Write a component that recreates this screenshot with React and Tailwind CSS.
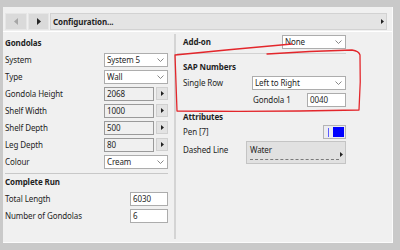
import React from "react";

const font = { fontFamily: '"Noto Sans", "Open Sans", sans-serif' };

function Chevron() {
  return (
    <svg width="7" height="4" viewBox="0 0 7 4" className="shrink-0">
      <path d="M0.5 0.5 L3.5 3.5 L6.5 0.5" fill="none" stroke="#7a7a7a" strokeWidth="0.9" />
    </svg>
  );
}

function Tri({ color = "#222" }) {
  return (
    <svg width="3" height="5" viewBox="0 0 3 5">
      <path d="M0 0 L3 2.5 L0 5 Z" fill={color} />
    </svg>
  );
}

function Dropdown({ value, w }) {
  return (
    <div className={`${w} h-[14px] bg-white border border-[#adadad] flex items-center justify-between pl-[2px] pr-[3px]`}>
      <span className="leading-none">{value}</span>
      <Chevron />
    </div>
  );
}

function NumField({ value }) {
  return (
    <div className="flex items-center gap-[2px]">
      <div className="w-[50px] h-[14px] bg-[#f0f0f0] border border-[#9a9a9a] flex items-center pl-[2px]">
        <span className="leading-none">{value}</span>
      </div>
      <div className="w-[12px] h-[13px] bg-[#e3e3e3] border border-[#d0d0d0] flex items-center justify-center">
        <Tri />
      </div>
    </div>
  );
}

function TextField({ value, w }) {
  return (
    <div className={`${w} h-[14px] bg-white border border-[#acacac] flex items-center pl-[2px]`}>
      <span className="leading-none">{value}</span>
    </div>
  );
}

function Row({ label, children, h = "h-[17px]" }) {
  return (
    <div className={`${h} flex items-center justify-between`}>
      <span className="leading-none">{label}</span>
      {children}
    </div>
  );
}

export default function App() {
  return (
    <div className="w-[400px] h-[250px] bg-[#c9c9c9] relative overflow-hidden text-[8px] tracking-[-0.1px] text-[#1f1f1f]" style={font}>
      <div className="ml-[3px] mt-[7px] w-[390px] h-[236px] bg-[#f0f0f0] border-r border-b border-[#fbfbfb] flex flex-col">
        {/* toolbar */}
        <div className="mt-[6px] h-[17px] flex gap-[1px] pl-[2px] pr-[5px]">
          <div className="w-[22px] bg-[#dadada] border border-[#e6e6e6] flex items-center justify-center">
            <svg width="4" height="7" viewBox="0 0 4 7"><path d="M4 0 L0 3.5 L4 7 Z" fill="#a6a6a6" /></svg>
          </div>
          <div className="w-[21px] bg-[#dadada] border border-[#e6e6e6] flex items-center justify-center">
            <svg width="4" height="7" viewBox="0 0 4 7"><path d="M0 0 L4 3.5 L0 7 Z" fill="#262626" /></svg>
          </div>
          <div className="flex-1 bg-[#e4e4e4] border border-[#d2d2d2] flex items-center justify-between pl-[2px] pr-[2px]">
            <span className="font-bold leading-none">Configuration...</span>
            <Tri />
          </div>
        </div>
        <div className="mt-[1px] h-px bg-white" />
        {/* body */}
        <div className="flex flex-1">
          {/* left */}
          <div className="w-[171px] pl-[2px] pr-[6px] pt-[2px] flex flex-col">
            <div className="h-[17px] flex items-center font-bold leading-none">Gondolas</div>
            <Row label="System"><Dropdown value="System 5" w="w-[64px]" /></Row>
            <Row label="Type"><Dropdown value="Wall" w="w-[64px]" /></Row>
            <Row label="Gondola Height"><NumField value="2068" /></Row>
            <Row label="Shelf Width"><NumField value="1000" /></Row>
            <Row label="Shelf Depth"><NumField value="500" /></Row>
            <Row label="Leg Depth"><NumField value="80" /></Row>
            <Row label="Colour"><Dropdown value="Cream" w="w-[64px]" /></Row>
            <div className="mt-[3px] h-px bg-[#c8c8c8]" />
            <div className="h-[16px] flex items-center font-bold leading-none">Complete Run</div>
            <Row label="Total Length"><TextField value="6030" w="w-[38px]" /></Row>
            <Row label="Number of Gondolas"><TextField value="6" w="w-[38px]" /></Row>
          </div>
          {/* divider */}
          <div className="w-[2px] bg-[#d4d4d4] mt-[2px] mb-[3px]" />
          {/* right */}
          <div className="w-[170px] pl-[1px] pt-[2px] flex flex-col">
            <div className="h-[16px] flex items-center justify-between pl-[6px]">
              <span className="font-bold leading-none">Add-on</span>
              <Dropdown value="None" w="w-[64px]" />
            </div>
            <div className="mt-[3px] h-px bg-[#d2d2d2]" />
            <div className="mt-[4px] pl-[6px] h-[17px] flex items-center font-bold leading-none">SAP Numbers</div>
            <div className="h-[15px] flex items-center justify-between pl-[6px]">
              <span className="leading-none">Single Row</span>
              <Dropdown value="Left to Right" w="w-[94px]" />
            </div>
            <div className="mt-[2px] h-[16px] flex items-center pl-[76px]">
              <span className="leading-none flex-1">Gondola 1</span>
              <TextField value="0040" w="w-[39px]" />
            </div>
            <div className="pl-[6px] h-[17px] flex items-center font-bold leading-none">Attributes</div>
            <div className="h-[14px] flex items-center justify-between pl-[6px]">
              <span className="leading-none">Pen [7]</span>
              <div className="w-[23px] h-[14px] bg-[#ececf2] border border-[#b4b4b4] flex items-center pl-[4px] gap-[4px]">
                <div className="w-[1px] h-[9px] bg-[#5b5bff]" />
                <div className="w-[11px] h-[10px] bg-[#0000ff]" />
              </div>
            </div>
            <div className="mt-[2px] flex items-start justify-between pl-[6px]">
              <span className="leading-none mt-[5px]">Dashed Line</span>
              <div className="w-[100px] h-[23px] bg-[#e1e1e1] border border-[#c4c4c4] relative pl-[3px] pt-[4px]">
                <span className="leading-none block">Water</span>
                <div className="mt-[5px] mr-[6px] border-t border-dashed border-[#7a7a7a]" />
                <div className="absolute right-[2px] top-[10px]"><Tri /></div>
              </div>
            </div>
          </div>
        </div>
      </div>
      {/* red annotation */}
      <svg className="absolute inset-0 pointer-events-none" width="400" height="250" viewBox="0 0 400 250">
        <path
          d="M292 44 Q235 49 175 55 Q176 84 177 111 Q270 112 359 110 Q361 82 360 55 Q359 51 352 50 Q310 51 267 54"
          fill="none"
          stroke="#e3262b"
          strokeWidth="1.3"
          strokeLinecap="round"
          strokeLinejoin="round"
        />
      </svg>
    </div>
  );
}
